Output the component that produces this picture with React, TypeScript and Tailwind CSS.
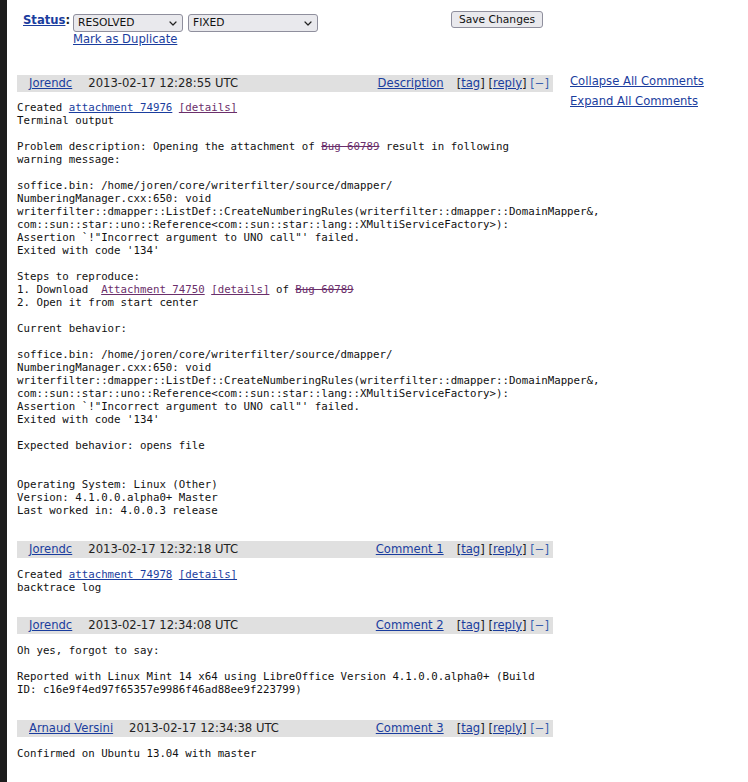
import React from "react";

const LINK = "text-[#1a3d9e] underline";
const VISITED = "text-[#6b2f6b] underline";

function Sel({ value, width }: { value: string; width: string }) {
  return (
    <div
      className={`${width} h-[18px] flex items-center justify-between border border-[#8f8f9d] rounded-[3px] bg-[#e9e9ed] pl-[4px] pr-[5px] text-[10.7px] text-[#111]`}
    >
      <span>{value}</span>
      <svg width="8" height="5" viewBox="0 0 8 5">
        <path d="M1 1 L4 4 L7 1" fill="none" stroke="#222" strokeWidth="1.2" strokeLinecap="round" strokeLinejoin="round" />
      </svg>
    </div>
  );
}

function Header({ author, date, label }: { author: string; date: string; label: string }) {
  return (
    <div className="h-[17px] flex items-center bg-[#e0e0e0] pl-[12px] pr-[4px] text-[#222]">
      <a className={LINK}>{author}</a>
      <span className="ml-[16px]">{date}</span>
      <a className={`${LINK} ml-auto`}>{label}</a>
      <span className="ml-[13px] whitespace-pre">
        [<a className={LINK}>tag</a>] [<a className={LINK}>reply</a>] <span className="text-[#3a5fae]">[−]</span>
      </span>
    </div>
  );
}

function Bug() {
  return <span className="text-[#6b2f6b] line-through">Bug 60789</span>;
}

const trace = `soffice.bin: /home/joren/core/writerfilter/source/dmapper/
NumberingManager.cxx:650: void
writerfilter::dmapper::ListDef::CreateNumberingRules(writerfilter::dmapper::DomainMapper&,
com::sun::star::uno::Reference<com::sun::star::lang::XMultiServiceFactory>):
Assertion \`!"Incorrect argument to UNO call"' failed.
Exited with code '134'`;

const preCls =
  "font-['DejaVu_Sans_Mono',monospace] text-[10.75px] leading-[13px] whitespace-pre text-[#111]";

export default function App() {
  return (
    <div className="min-h-[782px] flex bg-white font-['DejaVu_Sans',sans-serif] text-[11.6px] text-[#222]">
      <div className="w-[7px] shrink-0 bg-[#1c1c1c]" />
      <div className="pl-[10px] flex-1">
        <div className="flex items-start pt-[11px]">
          <div className="pl-[6px] mt-[2px] font-bold leading-[14px] w-[56px]">
            <a className={LINK}>Status</a>:
          </div>
          <div className="mt-[3px] flex flex-col">
            <div className="flex gap-[5px]">
              <Sel value="RESOLVED" width="w-[110px]" />
              <Sel value="FIXED" width="w-[130px]" />
            </div>
            <a className={`${LINK} leading-[14px]`}>Mark as Duplicate</a>
          </div>
          <button className="ml-[133px] h-[17px] w-[92px] border border-[#8f8f9d] rounded-[3px] bg-[#e9e9ed] text-[10.7px] text-[#111] leading-[15px]">
            Save Changes
          </button>
        </div>

        <div className="flex items-start mt-[29px]">
          <div className="w-[536px] shrink-0">
            <div className="mb-[24px]">
              <Header author="Jorendc" date="2013-02-17 12:28:55 UTC" label="Description" />
              <div className={`${preCls} mt-[9px]`}>
                {"Created "}
                <a className={LINK}>attachment 74976</a> <a className={VISITED}>[details]</a>
                {"\nTerminal output\n\nProblem description: Opening the attachment of "}
                <Bug />
                {" result in following\nwarning message:\n\n"}
                {trace}
                {"\n\nSteps to reproduce:\n1. Download  "}
                <a className={VISITED}>Attachment 74750</a> <a className={VISITED}>[details]</a>
                {" of "}
                <Bug />
                {"\n2. Open it from start center\n\nCurrent behavior:\n\n"}
                {trace}
                {"\n\nExpected behavior: opens file\n\n\nOperating System: Linux (Other)\nVersion: 4.1.0.0.alpha0+ Master\nLast worked in: 4.0.0.3 release"}
              </div>
            </div>

            <div className="mb-[23px]">
              <Header author="Jorendc" date="2013-02-17 12:32:18 UTC" label="Comment 1" />
              <div className={`${preCls} mt-[10px]`}>
                {"Created "}
                <a className={LINK}>attachment 74978</a> <a className={LINK}>[details]</a>
                {"\nbacktrace log"}
              </div>
            </div>

            <div className="mb-[24px]">
              <Header author="Jorendc" date="2013-02-17 12:34:08 UTC" label="Comment 2" />
              <div className={`${preCls} mt-[10px]`}>
                {"Oh yes, forgot to say:\n\nReported with Linux Mint 14 x64 using LibreOffice Version 4.1.0.0.alpha0+ (Build\nID: c16e9f4ed97f65357e9986f46ad88ee9f223799)"}
              </div>
            </div>

            <div>
              <Header author="Arnaud Versini" date="2013-02-17 12:34:38 UTC" label="Comment 3" />
              <div className={`${preCls} mt-[10px]`}>{"Confirmed on Ubuntu 13.04 with master"}</div>
            </div>
          </div>
          <div className="ml-[17px] -mt-[1px] flex flex-col gap-[6px] leading-[14px]">
            <a className={LINK}>Collapse All Comments</a>
            <a className={LINK}>Expand All Comments</a>
          </div>
        </div>
      </div>
    </div>
  );
}
